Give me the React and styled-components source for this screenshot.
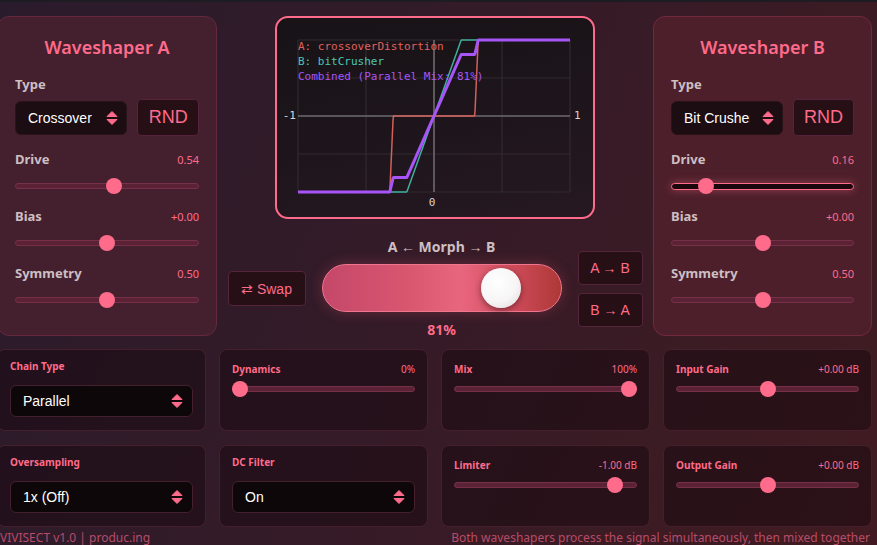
import React from 'react';
import styled, { createGlobalStyle, css } from 'styled-components';

const PINK = '#ff6b8a';
const UI = '"Noto Sans", "Open Sans", sans-serif';
const NATIVE = '"Liberation Sans", Arial, sans-serif';
const MONO = '"DejaVu Sans Mono", "Liberation Mono", monospace';

const GlobalStyle = createGlobalStyle`
  html, body {
    margin: 0;
    padding: 0;
    height: 100%;
    overflow: hidden;
  }
  body {
    background: #2b1b29;
    font-family: ${UI};
  }
`;

const Page = styled.div`
  height: 545px;
  box-sizing: border-box;
  border-top: 2px solid #1c1c22;
  background: linear-gradient(115deg, #2a1b2c 0%, #341b28 45%, #411b21 100%);
  overflow: hidden;
`;

const Shell = styled.div`
  width: 875px;
  margin-left: -3px;
  padding-top: 14px;
  display: flex;
  flex-direction: column;
`;

const TopRow = styled.div`
  display: grid;
  grid-template-columns: 220px 1fr 219px;
  grid-template-rows: 320px;
  align-items: start;
`;

const Panel = styled.section`
  height: 320px;
  box-sizing: border-box;
  border: 1px solid ${p => (p.$tone === 'b' ? '#72293d' : '#64283f')};
  border-radius: 12px;
  background: ${p => (p.$tone === 'b' ? '#4d1f2a' : '#44202f')};
  padding: 18px 17px 0;
  display: flex;
  flex-direction: column;
`;

const PanelTitle = styled.h2`
  margin: 0 0 17px;
  font-size: 18px;
  line-height: 24px;
  font-weight: 600;
  color: ${PINK};
  text-align: center;
`;

const FieldLabel = styled.div`
  font-size: 13px;
  line-height: 16px;
  font-weight: 700;
  color: #cdbfc3;
  margin-bottom: 7px;
`;

const TypeRow = styled.div`
  display: flex;
  align-items: center;
  gap: 10px;
  margin-bottom: 15px;
`;

const SelectBox = styled.div`
  box-sizing: border-box;
  display: flex;
  align-items: center;
  justify-content: space-between;
  font-family: ${NATIVE};
  font-size: 14px;
  color: #fff;
  border-radius: 6px;
  white-space: nowrap;
  overflow: hidden;
  ${p =>
    p.$card
      ? css`
          height: 32px;
          width: 100%;
          background: #0e0709;
          border: 1px solid #43202b;
          padding: 0 9px 0 12px;
        `
      : css`
          height: 34px;
          width: 113px;
          background: #1c0d12;
          border: 1px solid #2a1319;
          padding: 0 8px 0 12px;
        `}
`;

const SelectText = styled.span`
  overflow: hidden;
  text-overflow: clip;
  max-width: ${p => (p.$narrow ? '66px' : 'none')};
`;

const SquareButton = styled.button`
  box-sizing: border-box;
  font-family: ${NATIVE};
  color: ${PINK};
  background: #261016;
  border: 1px solid #55243a;
  border-radius: 4px;
  padding: 0;
  cursor: pointer;
  ${p =>
    p.$big
      ? css`
          width: 62px;
          height: 37px;
          font-size: 18px;
        `
      : css`
          width: ${p.$wide ? '78px' : '65px'};
          height: ${p.$wide ? '35px' : '34px'};
          font-size: 14px;
        `}
`;

const Control = styled.div`
  margin-bottom: 14px;
`;

const ControlHead = styled.div`
  display: flex;
  justify-content: space-between;
  align-items: center;
  height: ${p => (p.$card ? '18px' : '16px')};
  margin-bottom: ${p => (p.$card ? '3px' : '11px')};
`;

const ControlName = styled.span`
  font-weight: 700;
  font-size: ${p => (p.$card ? '10px' : '13px')};
  color: ${p => (p.$card ? PINK : '#cdbfc3')};
`;

const ControlValue = styled.span`
  font-size: ${p => (p.$card ? '10px' : '11px')};
  color: ${PINK};
`;

const Track = styled.div`
  position: relative;
  height: 16px;
  display: flex;
  align-items: center;
`;

const Rail = styled.div`
  flex: 1;
  height: 6px;
  box-sizing: border-box;
  border-radius: 4px;
  ${p =>
    p.$focus
      ? css`
          height: 7px;
          background: #1a080d;
          border: 1.5px solid ${PINK};
          box-shadow: 0 0 8px rgba(255, 107, 138, 0.45);
        `
      : css`
          background: #5a2234;
          border: 1px solid #763047;
        `}
`;

const Knob = styled.div`
  position: absolute;
  top: 0;
  width: 16px;
  height: 16px;
  border-radius: 50%;
  background: ${PINK};
`;

const Center = styled.div`
  display: flex;
  flex-direction: column;
  align-items: center;
  height: 320px;
`;

const Scope = styled.div`
  width: 320px;
  height: 203px;
  flex-shrink: 0;
  box-sizing: border-box;
  border: 2px solid ${PINK};
  border-radius: 13px;
  background: linear-gradient(170deg, #171317 0%, #1d151b 50%, #261821 100%);
  overflow: hidden;
  svg {
    display: block;
  }
`;

const MorphRow = styled.div`
  margin-top: 19px;
  display: flex;
  align-items: center;
  gap: 16px;
`;

const MorphColumn = styled.div`
  display: flex;
  flex-direction: column;
  align-items: center;
`;

const MorphLabel = styled.div`
  font-size: 14px;
  line-height: 18px;
  font-weight: 700;
  color: #cdbfc3;
  margin-bottom: 8px;
`;

const MorphTrack = styled.div`
  position: relative;
  width: 240px;
  height: 48px;
  box-sizing: border-box;
  border-radius: 24px;
  border: 1px solid #f0768f;
  background: linear-gradient(90deg, #c4486a 0%, #d9566f 35%, #e9667f 58%, #cf4b5a 80%, #ad3836 100%);
  box-shadow: 0 0 14px rgba(255, 90, 120, 0.25);
`;

const MorphKnob = styled.div`
  position: absolute;
  top: 3px;
  width: 40px;
  height: 40px;
  border-radius: 50%;
  background: radial-gradient(circle at 40% 35%, #ffffff 0%, #f7f5f6 55%, #dcd8da 100%);
  box-shadow: 0 2px 6px rgba(0, 0, 0, 0.45);
`;

const MorphValue = styled.div`
  margin-top: 9px;
  font-size: 14px;
  line-height: 18px;
  font-weight: 700;
  color: ${PINK};
`;

const ButtonStack = styled.div`
  display: flex;
  flex-direction: column;
  gap: 8px;
`;

const BottomGrid = styled.div`
  margin-top: 13px;
  display: grid;
  grid-template-columns: repeat(4, 1fr);
  gap: 14px 13px;
`;

const Card = styled.div`
  height: 82px;
  box-sizing: border-box;
  border: 1px solid #45202c;
  border-radius: 8px;
  background: rgba(22, 8, 14, 0.5);
  padding: 10px 12px;
`;

const CardLabel = styled.div`
  font-size: 10px;
  line-height: 12px;
  font-weight: 700;
  color: ${PINK};
  margin-bottom: 13px;
`;

const Footer = styled.footer`
  display: flex;
  justify-content: space-between;
  padding: 3px 2px 0 3px;
  font-size: 12px;
  line-height: 16px;
  color: #b84b69;
`;

function Arrows() {
  return (
    <svg width="12" height="16" viewBox="0 0 12 16">
      <path d="M6 1.5 L11 6.5 H1 Z" fill={PINK} strokeLinejoin="round" stroke={PINK} strokeWidth="1" />
      <path d="M6 14.5 L11 9.5 H1 Z" fill={PINK} strokeLinejoin="round" stroke={PINK} strokeWidth="1" />
    </svg>
  );
}

function Slider({ pos, focus }) {
  return (
    <Track>
      <Rail $focus={focus} />
      <Knob style={{ left: `calc(${pos} * (100% - 16px))` }} />
    </Track>
  );
}

function Param({ name, value, pos, focus, card }) {
  const body = (
    <>
      <ControlHead $card={card}>
        <ControlName $card={card}>{name}</ControlName>
        <ControlValue $card={card}>{value}</ControlValue>
      </ControlHead>
      <Slider pos={pos} focus={focus} />
    </>
  );
  return card ? body : <Control>{body}</Control>;
}

function Shaper({ title, type, tone, params }) {
  return (
    <Panel $tone={tone}>
      <PanelTitle>{title}</PanelTitle>
      <FieldLabel>Type</FieldLabel>
      <TypeRow>
        <SelectBox>
          <SelectText $narrow>{type}</SelectText>
          <Arrows />
        </SelectBox>
        <SquareButton $big>RND</SquareButton>
      </TypeRow>
      {params.map(p => (
        <Param key={p.name} {...p} />
      ))}
    </Panel>
  );
}

// transfer curves: plot area 272x152 centred at (157, 98)
const crossover = x => {
  const a = Math.abs(x);
  if (a < 0.3) return 0;
  return Math.sign(x) * Math.min(1, (a - 0.3) / 0.025);
};
const crusher = x => Math.max(-1, Math.min(1, x * 5));
const combined = x => 0.19 * crossover(x) + 0.81 * crusher(x);

const curve = fn => {
  const pts = [];
  for (let i = 0; i <= 544; i++) {
    const x = -1 + (i / 544) * 2;
    pts.push(`${(157 + x * 136).toFixed(2)},${(98 - fn(x) * 76).toFixed(2)}`);
  }
  return pts.join(' ');
};

function TransferPlot() {
  const xs = [21, 89, 225, 293];
  const ys = [22, 60, 136, 174];
  return (
    <svg width="316" height="199" viewBox="0 0 316 199">
      {xs.map(x => (
        <line key={`v${x}`} x1={x} y1="22" x2={x} y2="174" stroke="#302a2f" strokeWidth="1.2" />
      ))}
      {ys.map(y => (
        <line key={`h${y}`} x1="21" y1={y} x2="293" y2={y} stroke="#302a2f" strokeWidth="1.2" />
      ))}
      <line x1="21" y1="98" x2="293" y2="98" stroke="#6e6a6d" strokeWidth="1.6" />
      <line x1="157" y1="22" x2="157" y2="174" stroke="#6e6a6d" strokeWidth="1.6" />
      <polyline points={curve(crossover)} fill="none" stroke="#d4605a" strokeWidth="1.5" />
      <polyline points={curve(crusher)} fill="none" stroke="#3fae9e" strokeWidth="1.5" />
      <polyline points={curve(combined)} fill="none" stroke="#a855f7" strokeWidth="3" strokeLinejoin="round" />
      <g fontFamily={MONO} fontSize="11" dominantBaseline="middle">
        <text x="21" y="29" fill="#e0625e">A: crossoverDistortion</text>
        <text x="21" y="44" fill="#4cc6b4">B: bitCrusher</text>
        <text x="21" y="59" fill="#a855f7">Combined (Parallel Mix: 81%)</text>
        <text x="19" y="98" fill="#d8d4d6" textAnchor="end">-1</text>
        <text x="297" y="98" fill="#d8d4d6">1</text>
        <text x="155" y="185" fill="#d8d4d6" textAnchor="middle">0</text>
      </g>
    </svg>
  );
}

const shaperA = [
  { name: 'Drive', value: '0.54', pos: 0.54 },
  { name: 'Bias', value: '+0.00', pos: 0.5 },
  { name: 'Symmetry', value: '0.50', pos: 0.5 },
];

const shaperB = [
  { name: 'Drive', value: '0.16', pos: 0.16, focus: true },
  { name: 'Bias', value: '+0.00', pos: 0.5 },
  { name: 'Symmetry', value: '0.50', pos: 0.5 },
];

const cards = [
  { kind: 'select', name: 'Chain Type', value: 'Parallel' },
  { kind: 'slider', name: 'Dynamics', value: '0%', pos: 0 },
  { kind: 'slider', name: 'Mix', value: '100%', pos: 1 },
  { kind: 'slider', name: 'Input Gain', value: '+0.00 dB', pos: 0.5 },
  { kind: 'select', name: 'Oversampling', value: '1x (Off)' },
  { kind: 'select', name: 'DC Filter', value: 'On' },
  { kind: 'slider', name: 'Limiter', value: '-1.00 dB', pos: 11 / 12 },
  { kind: 'slider', name: 'Output Gain', value: '+0.00 dB', pos: 0.5 },
];

export default function App() {
  const morph = 0.81;
  return (
    <Page>
      <GlobalStyle />
      <Shell>
        <TopRow>
          <Shaper title="Waveshaper A" type="Crossover" tone="a" params={shaperA} />
          <Center>
            <Scope>
              <TransferPlot />
            </Scope>
            <MorphRow>
              <SquareButton $wide>⇄ Swap</SquareButton>
              <MorphColumn>
                <MorphLabel>A ← Morph → B</MorphLabel>
                <MorphTrack>
                  <MorphKnob style={{ left: `${3 + morph * 192}px` }} />
                </MorphTrack>
                <MorphValue>{Math.round(morph * 100)}%</MorphValue>
              </MorphColumn>
              <ButtonStack>
                <SquareButton>A → B</SquareButton>
                <SquareButton>B → A</SquareButton>
              </ButtonStack>
            </MorphRow>
          </Center>
          <Shaper title="Waveshaper B" type="Bit Crusher" tone="b" params={shaperB} />
        </TopRow>

        <BottomGrid>
          {cards.map(c =>
            c.kind === 'select' ? (
              <Card key={c.name}>
                <CardLabel>{c.name}</CardLabel>
                <SelectBox $card>
                  <SelectText>{c.value}</SelectText>
                  <Arrows />
                </SelectBox>
              </Card>
            ) : (
              <Card key={c.name}>
                <Param card name={c.name} value={c.value} pos={c.pos} />
              </Card>
            )
          )}
        </BottomGrid>

        <Footer>
          <span>VIVISECT v1.0 | produc.ing</span>
          <span>Both waveshapers process the signal simultaneously, then mixed together</span>
        </Footer>
      </Shell>
    </Page>
  );
}
